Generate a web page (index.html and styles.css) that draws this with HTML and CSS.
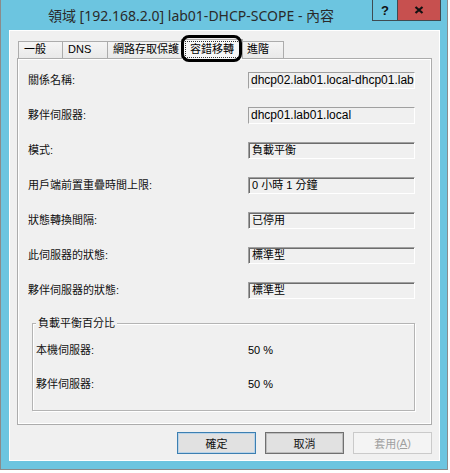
FILE: index.html
```html
<!DOCTYPE html>
<html lang="zh-Hant">
<head>
<meta charset="utf-8">
<title>領域 [192.168.2.0] lab01-DHCP-SCOPE - 內容</title>
<link rel="stylesheet" href="styles.css">
</head>
<body>
<div class="window">
  <div class="titlebar">
    <div class="title">領域 [192.168.2.0] lab01-DHCP-SCOPE - 內容</div>
    <div class="cbtns">
      <div class="cbtn help">?</div>
      <div class="cbtn close">
        <svg width="10" height="8" viewBox="0 0 10 8"><path d="M1.5 1 L8.5 7 M8.5 1 L1.5 7" stroke="#111" stroke-width="2.2" fill="none"/></svg>
      </div>
    </div>
  </div>
  <div class="client">
    <div class="tabs">
      <div class="tab t1">一般</div>
      <div class="tab t2">DNS</div>
      <div class="tab t3">網路存取保護</div>
      <div class="tab sel"><span class="focus">容錯移轉</span></div>
      <div class="tab t5">進階</div>
      <div class="annot"></div>
    </div>
    <div class="panel">
      <div class="fields">
        <div class="label">關係名稱:</div>
        <div class="field"><span class="en">dhcp02.lab01.local-dhcp01.lab01.local</span></div>
        <div class="label">夥伴伺服器:</div>
        <div class="field"><span class="en">dhcp01.lab01.local</span></div>
        <div class="label">模式:</div>
        <div class="field dk">負載平衡</div>
        <div class="label">用戶端前置重疊時間上限:</div>
        <div class="field dk">0 小時 1 分鐘</div>
        <div class="label">狀態轉換間隔:</div>
        <div class="field dk">已停用</div>
        <div class="label">此伺服器的狀態:</div>
        <div class="field dk">標準型</div>
        <div class="label">夥伴伺服器的狀態:</div>
        <div class="field dk">標準型</div>
      </div>
      <div class="group">
        <div class="legend">負載平衡百分比</div>
        <div class="grows">
          <div class="label">本機伺服器:</div>
          <div class="value">50 %</div>
          <div class="label">夥伴伺服器:</div>
          <div class="value">50 %</div>
        </div>
      </div>
    </div>
    <div class="buttons">
      <div class="btn default">確定</div>
      <div class="btn cancel">取消</div>
      <div class="btn disabled">套用(<u>A</u>)</div>
    </div>
  </div>
</div>
</body>
</html>
```

FILE: styles.css
```css
* { box-sizing: border-box; }
html, body { margin: 0; padding: 0; background: #fff; }
body {
  font-family: "Liberation Sans", "Noto Sans CJK TC", sans-serif;
  font-size: 11px;
  color: #000;
}

.window {
  width: 448px;
  height: 470px;
  background: #6cc5e0;
  border: 1px solid #8b8b8b;
  border-top: none;
  display: flex;
  flex-direction: column;
}

.titlebar {
  height: 30px;
  flex: none;
  display: flex;
  padding-right: 6px;
}
.title {
  flex: 1;
  text-align: center;
  font-family: "Noto Sans", "Noto Sans CJK TC", sans-serif;
  font-size: 14px;
  line-height: 30px;
  padding-top: 1px;
  padding-left: 9px;
  color: #2a2a2a;
  white-space: nowrap;
}
.cbtns { display: flex; align-items: flex-start; }
.cbtn {
  height: 21px;
  border: 1px solid #3f4b52;
  border-top: none;
  display: flex;
  align-items: center;
  justify-content: center;
}
.help {
  width: 26px;
  font-weight: bold;
  font-size: 13px;
  color: #111;
}
.close {
  width: 43px;
  border-left: none;
  background: #c7504f;
}

.client {
  flex: 1;
  margin: 0 7px 8px 8px;
  background: #f0f0f0;
  border: 1px solid #fff;
  padding: 8px 7px 6px 7px;
  display: flex;
  flex-direction: column;
}

.tabs {
  position: relative;
  z-index: 1;
  display: flex;
  align-items: flex-end;
  height: 19px;
  margin-left: 1px;
}
.tab {
  height: 17px;
  border: 1px solid #acacac;
  border-bottom: none;
  background: linear-gradient(#f5f5f5, #e9e9e9);
  line-height: 15px;
  padding-left: 5px;
  white-space: nowrap;
  overflow: hidden;
}
.tab + .tab { margin-left: -1px; }
.t1 { width: 45px; }
.t2 { width: 46px; padding-left: 5px; }
.t3 { width: 77px; padding-left: 5px; }
.t5 { width: 44px; padding-left: 6px; }
.tab.sel {
  position: relative;
  z-index: 2;
  width: 62px;
  height: 20px;
  margin-left: -3px;
  margin-bottom: -1px;
  background: #f7f7f7;
  padding: 1px 2px 0 3px;
}
.tab.sel + .tab { margin-left: -3px; }
.focus {
  display: block;
  height: 17px;
  border: 1px dotted #333;
  padding-left: 4px;
  line-height: 15px;
}
.annot {
  position: absolute;
  z-index: 3;
  left: 163px;
  top: -4px;
  width: 61px;
  height: 27px;
  border: 3px solid #000;
  border-radius: 8px;
}

.panel {
  border: 1px solid #acacac;
  box-shadow: inset 0 0 0 1px #fff;
  background: #f0f0f0;
  padding: 13px 16px 13px 10px;
}

.fields {
  display: grid;
  grid-template-columns: 220px 167px;
  row-gap: 18px;
}
.label {
  height: 17px;
  line-height: 17px;
  white-space: nowrap;
  color: #111;
}
.field {
  height: 17px;
  border: 1px solid;
  border-color: #a0a0a0 #fff #fff #a0a0a0;
  padding-left: 2px;
  line-height: 15px;
  white-space: nowrap;
  overflow: hidden;
  background: #f0f0f0;
}
.field.dk {
  box-shadow: inset 1px 1px 0 #6d6d6d;
  padding-left: 3px;
}
.en { font-size: 12px; }

.group {
  position: relative;
  margin: 24px 0 0 4px;
  border: 1px solid #b4b4b4;
  box-shadow: inset 1px 1px 0 #fff, 1px 1px 0 #fff;
  padding: 18px 0 17px 3px;
}
.legend {
  position: absolute;
  top: -9px;
  left: 3px;
  padding: 0 2px;
  background: #f0f0f0;
  line-height: 17px;
  color: #111;
}
.grows {
  display: grid;
  grid-template-columns: 212px auto;
  row-gap: 17px;
}
.value { line-height: 17px; }

.buttons {
  display: flex;
  justify-content: flex-end;
  gap: 9px;
  margin-top: 7px;
}
.btn {
  width: 79px;
  height: 22px;
  border: 1px solid #adadad;
  background: #e1e1e1;
  display: flex;
  align-items: center;
  justify-content: center;
  color: #111;
}
.btn.default {
  border-color: #3c7fb1;
  box-shadow: inset 0 0 0 1px #b9d3e8;
}
.btn.cancel {
  border-color: #707070;
  box-shadow: inset 0 0 0 1px #bdbdbd;
}
.btn.disabled {
  border-color: #cacaca;
  background: #f4f4f4;
  color: #a0a0a0;
}
```
